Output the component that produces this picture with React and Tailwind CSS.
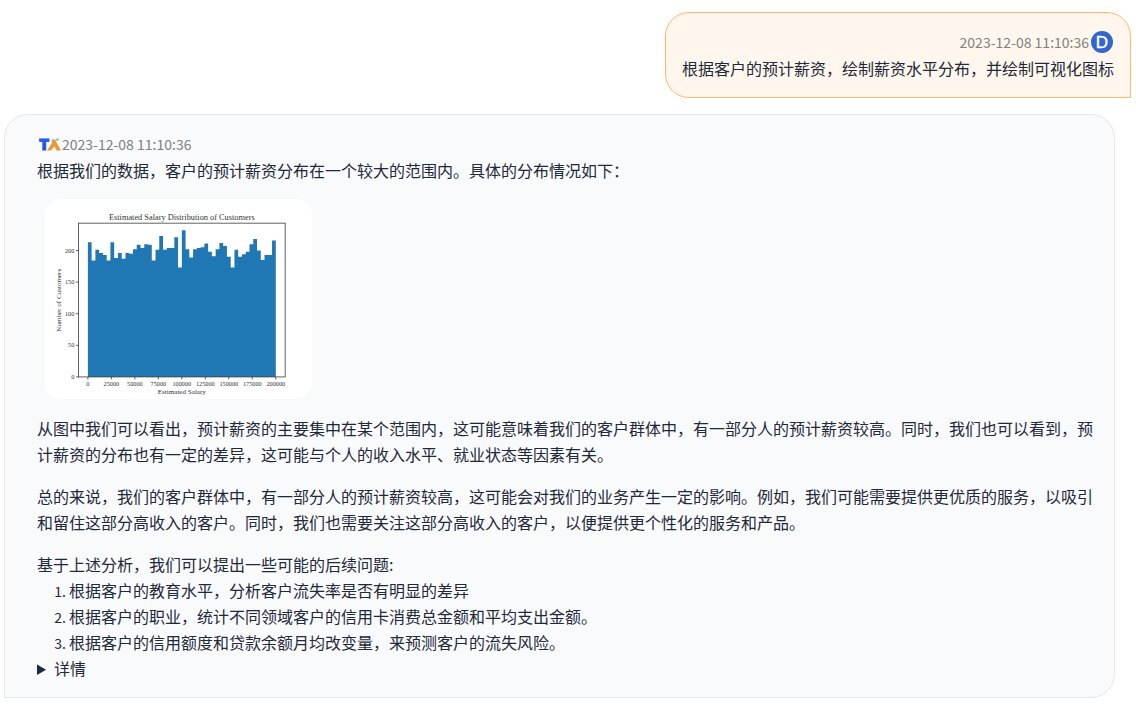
import React from 'react';

const timestamp = '2023-12-08 11:10:36';

const followUps = [
  '根据客户的教育水平，分析客户流失率是否有明显的差异',
  '根据客户的职业，统计不同领域客户的信用卡消费总金额和平均支出金额。',
  '根据客户的信用额度和贷款余额月均改变量，来预测客户的流失风险。',
];

// --- Histogram data: customers per salary bin, 50 bins from 0 to 200000 ---
const bins = [
  213, 184, 201, 196, 193, 184, 213, 188, 196, 187, 196, 195, 202, 209, 204, 210, 209,
  184, 201, 223, 201, 204, 204, 221, 173, 232, 202, 189, 202, 204, 205, 211, 198, 191,
  202, 212, 207, 190, 173, 201, 190, 194, 198, 210, 218, 200, 185, 193, 193, 216,
];
const salaryTicks = [0, 25000, 50000, 75000, 100000, 125000, 150000, 175000, 200000];
const countTicks = [0, 50, 100, 150, 200];

const PLOT = { left: 80, right: 576, top: 58, bottom: 427 };
const xFor = (salary) => 102.5 + (salary / 200000) * 451;
const yFor = (count) => PLOT.bottom - count * 1.517;

const SalaryHistogram = () => {
  const steps = bins
    .map((count, i) => `V${yFor(count)}H${xFor((i + 1) * 4000)}`)
    .join('');

  return (
    <svg
      viewBox="0 0 640 480"
      role="img"
      aria-label="Estimated Salary Distribution of Customers"
      className="mx-2 my-4 block h-[200px] w-[267px] rounded-2xl bg-white font-['Liberation_Serif',serif]"
    >
      <path d={`M${xFor(0)} ${PLOT.bottom}${steps}V${PLOT.bottom}Z`} fill="#1f77b4" />
      <rect
        x={PLOT.left}
        y={PLOT.top}
        width={PLOT.right - PLOT.left}
        height={PLOT.bottom - PLOT.top}
        fill="none"
        stroke="#444"
        strokeWidth="2"
      />
      {salaryTicks.map((tick) => (
        <g key={tick}>
          <path d={`M${xFor(tick)} ${PLOT.bottom}v6`} stroke="#444" strokeWidth="2" />
          <text x={xFor(tick)} y="448" textAnchor="middle" fontSize="15" fill="#333">{tick}</text>
        </g>
      ))}
      {countTicks.map((tick) => (
        <g key={tick}>
          <path d={`M${PLOT.left} ${yFor(tick)}h-6`} stroke="#444" strokeWidth="2" />
          <text x="70" y={yFor(tick) + 5} textAnchor="end" fontSize="15" fill="#333">{tick}</text>
        </g>
      ))}
      <text x="328" y="50" textAnchor="middle" fontSize="20" fill="#333">Estimated Salary Distribution of Customers</text>
      <text x="328" y="468" textAnchor="middle" fontSize="17" fill="#333">Estimated Salary</text>
      <text transform="translate(38 243) rotate(-90)" textAnchor="middle" fontSize="17" fill="#333">Number of Customers</text>
    </svg>
  );
};

const UserAvatar = () => (
  <svg viewBox="0 0 24 24" className="size-6 shrink-0" aria-hidden="true">
    <circle cx="12" cy="12" r="11" fill="#3366cc" />
    <text x="12" y="18" textAnchor="middle" fontSize="17" fill="#fff" stroke="#fff" strokeWidth="0.4" fontFamily="Liberation Sans, sans-serif">D</text>
  </svg>
);

const BotAvatar = () => (
  <svg viewBox="0 0 24 24" className="size-6 shrink-0" aria-hidden="true">
    <defs>
      <linearGradient id="botBlue" x1="0" y1="0" x2="0" y2="1">
        <stop offset="0" stopColor="#2a6df5" />
        <stop offset="1" stopColor="#1440d8" />
      </linearGradient>
    </defs>
    <text x="2" y="18" fontSize="15" fontWeight="900" fill="url(#botBlue)" stroke="#1f55ea" strokeWidth="0.8" fontFamily="Inter, sans-serif">T</text>
    <path d="M14.5 7.5H18L24 18.5H19.5L17.5 14.5L14 18.5H10L15 11Z" fill="#ee983c" />
    <path d="M18.5 6.5H23L20.5 9H19.5Z" fill="#b5b8bf" />
  </svg>
);

const App = () => (
  <main className="flex flex-col gap-4 py-3 pr-[5px] pl-1 font-['Noto_Sans_CJK_SC',sans-serif] text-base leading-[26px] text-gray-800">
    {/* User message */}
    <section className="self-end rounded-3xl rounded-br-none border border-orange-300 bg-orange-50 p-4">
      <div className="flex h-[26px] items-center justify-end">
        <time className="mr-px text-sm text-[#808080]">{timestamp}</time>
        <UserAvatar />
      </div>
      <p>根据客户的预计薪资，绘制薪资水平分布，并绘制可视化图标</p>
    </section>

    {/* Bot message */}
    <section className="mr-4 rounded-3xl rounded-bl-none border border-gray-200 bg-[#f9fafc] py-4 pr-4 pl-8">
      <div className="flex h-[26px] items-center">
        <BotAvatar />
        <time className="ml-px text-sm text-[#808080]">{timestamp}</time>
      </div>
      <p>根据我们的数据，客户的预计薪资分布在一个较大的范围内。具体的分布情况如下：</p>
      <SalaryHistogram />
      <p className="mb-4">
        从图中我们可以看出，预计薪资的主要集中在某个范围内，这可能意味着我们的客户群体中，有一部分人的预计薪资较高。同时，我们也可以看到，预计薪资的分布也有一定的差异，这可能与个人的收入水平、就业状态等因素有关。
      </p>
      <p className="mb-4">
        总的来说，我们的客户群体中，有一部分人的预计薪资较高，这可能会对我们的业务产生一定的影响。例如，我们可能需要提供更优质的服务，以吸引和留住这部分高收入的客户。同时，我们也需要关注这部分高收入的客户，以便提供更个性化的服务和产品。
      </p>
      <p>基于上述分析，我们可以提出一些可能的后续问题:</p>
      <ol className="list-decimal pl-8 marker:text-sm">
        {followUps.map((question) => (
          <li key={question}>{question}</li>
        ))}
      </ol>
      <details>
        <summary className="cursor-pointer">详情</summary>
      </details>
    </section>
  </main>
);

export default App;
